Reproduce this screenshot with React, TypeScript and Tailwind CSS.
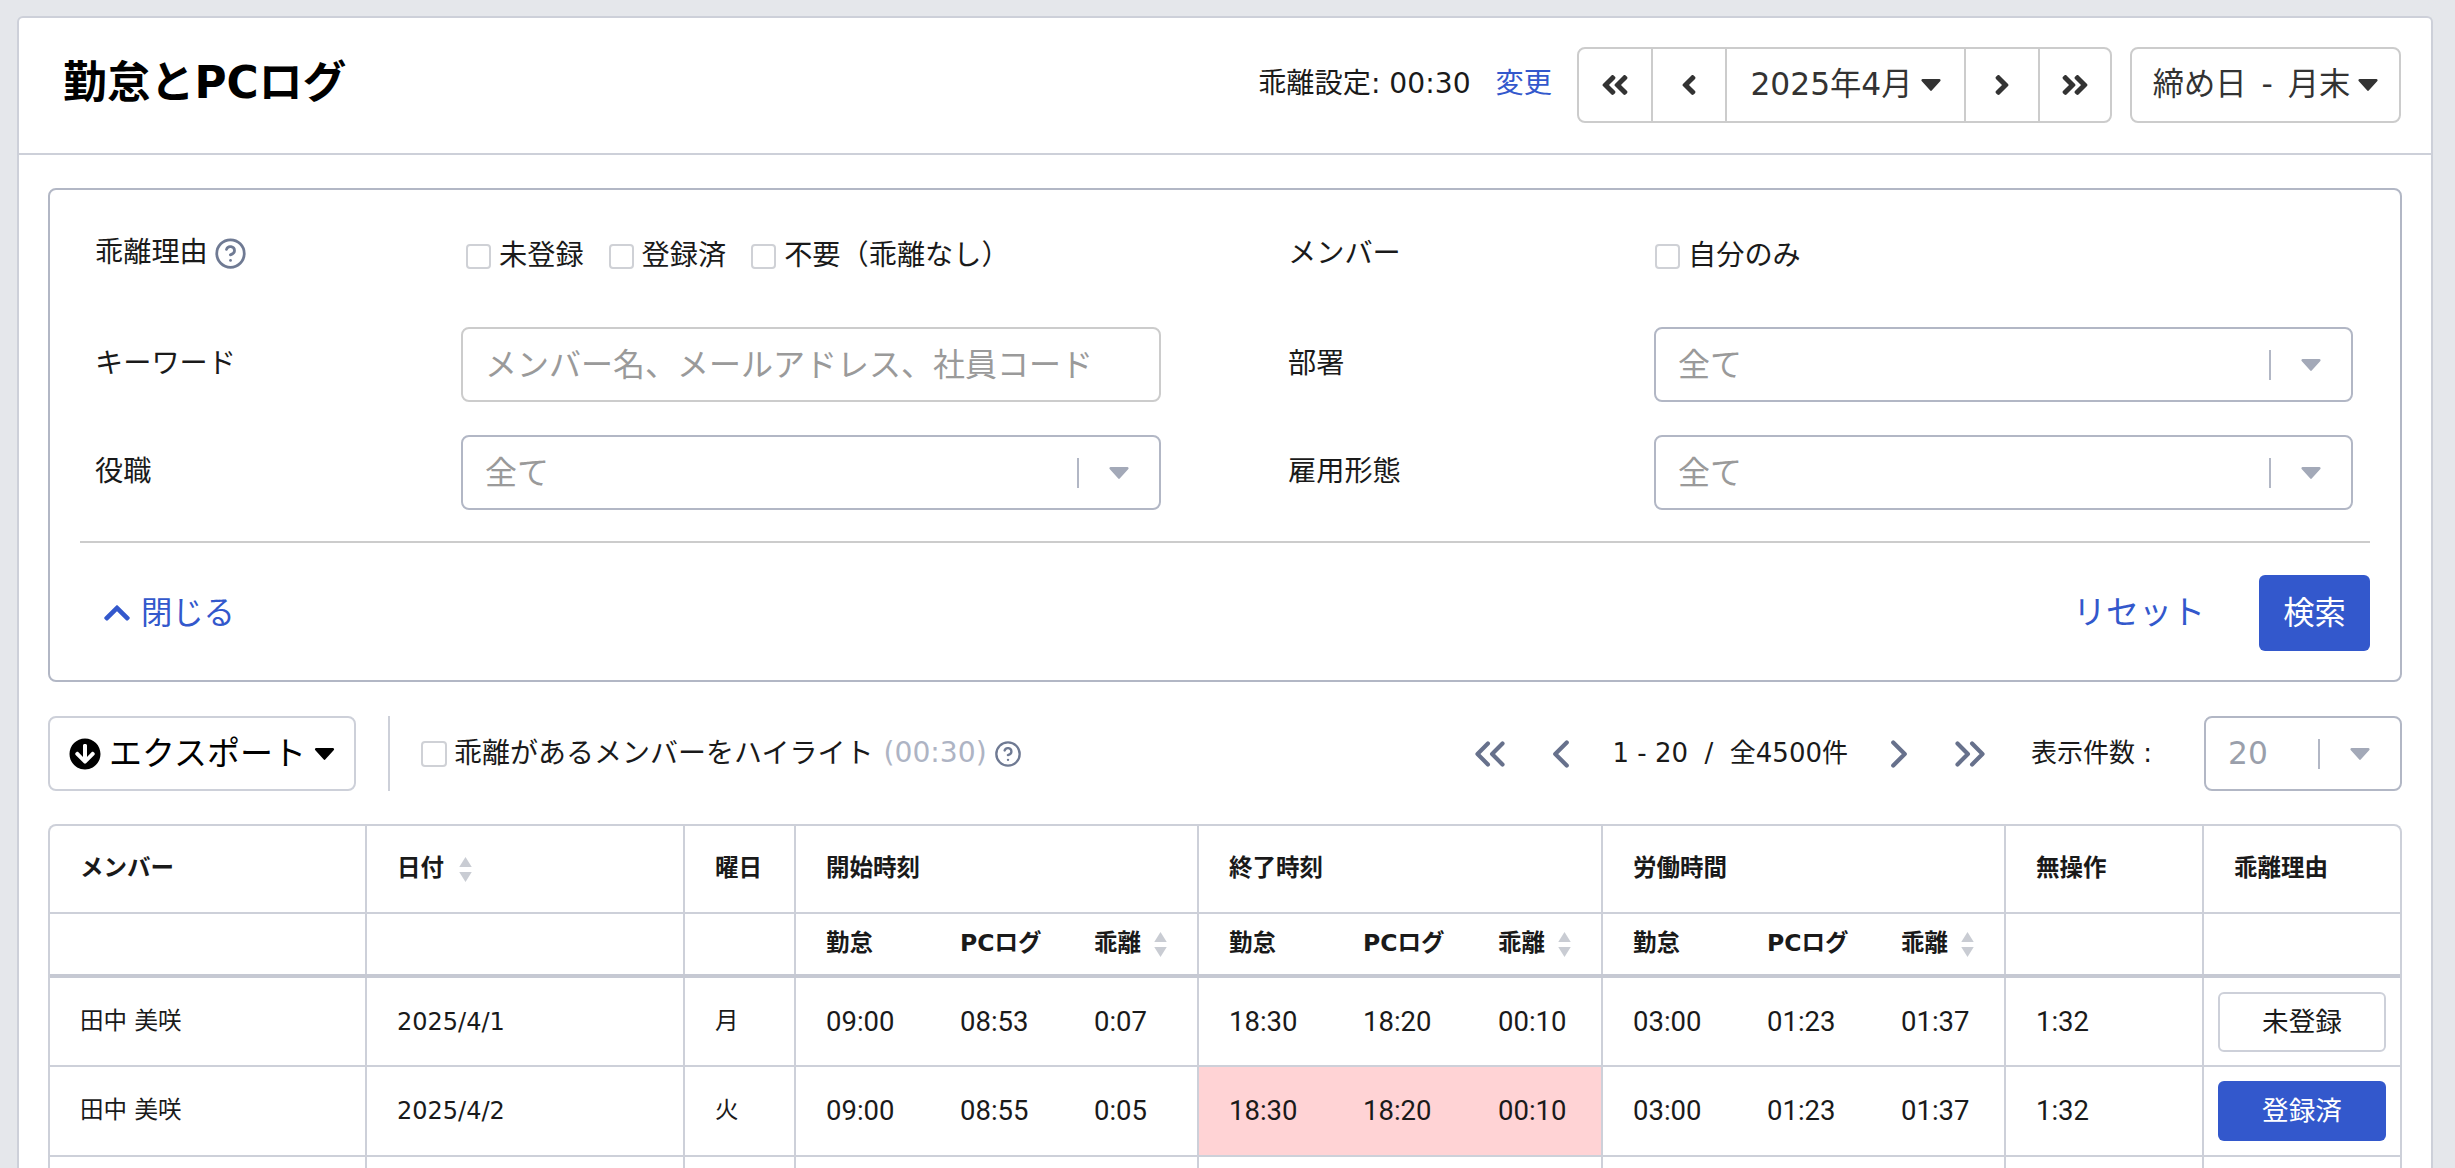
import { FaAngleDoubleLeft, FaAngleDoubleRight, FaAngleLeft, FaAngleRight, FaChevronUp, FaArrowCircleDown } from 'react-icons/fa';
import { ChevronsLeft, ChevronsRight, ChevronLeft, ChevronRight, CircleHelp } from 'lucide-react';

function Caret({ className }: { className: string }) {
  return (
    <svg viewBox="0 0 16 10" className={className} fill="currentColor">
      <path d="M1 0h14a1 1 0 0 1 .8 1.6l-7 7.8a1 1 0 0 1-1.6 0l-7-7.8A1 1 0 0 1 1 0z" />
    </svg>
  );
}

function SortIcon() {
  return (
    <svg viewBox="0 0 14 26" className="w-[15px] h-[25px] text-[#c9ccd3]" fill="currentColor">
      <path d="M7 0l6.5 10.5H.5z" />
      <path d="M7 26l6.5-10.5H.5z" />
    </svg>
  );
}

function Check({ label }: { label: string }) {
  return (
    <label className="flex items-center gap-[8px]">
      <span className="w-[25px] h-[25px] rounded-[4px] border-2 border-[#cfd1d6] bg-white" />
      <span className="text-[28.2px] text-[#1a1a1a]">{label}</span>
    </label>
  );
}

function SelectBox({ value }: { value: string }) {
  return (
    <div className="h-[75px] rounded-[8px] border-2 border-[#b2b7c5] flex items-center pl-[22px] bg-white">
      <span className="flex-1 text-[32px] text-[#9a9a9a]">{value}</span>
      <span className="w-[2px] h-[30px] bg-[#b2b7c5]" />
      <span className="w-[80px] flex justify-center">
        <Caret className="w-[20px] h-[12px] text-[#a3a9b8]" />
      </span>
    </div>
  );
}

const vline = 'border-r-2 border-[#cdd0d9]';
const th = 'text-left font-bold text-[23.5px] text-[#1a1a1a] align-middle';
const td = 'text-left text-[23.5px] text-[#1a1a1a] align-middle';
const time = "text-left font-['Roboto',sans-serif] text-[27.5px] text-[#1a1a1a] align-middle";

function SubHead() {
  return (
    <>
      <th className={`${th} pl-[30px]`}>勤怠</th>
      <th className={`${th} pl-[30px]`}>PCログ</th>
      <th className={`${th} pl-[30px] ${vline}`}>
        <span className="flex items-center gap-[12px]">乖離<SortIcon /></span>
      </th>
    </>
  );
}

function Times({ a, b, c, pink }: { a: string; b: string; c: string; pink?: boolean }) {
  const bg = pink ? 'bg-[#ffd3d5]' : '';
  return (
    <>
      <td className={`${time} pl-[30px] ${bg}`}>{a}</td>
      <td className={`${time} pl-[30px] ${bg}`}>{b}</td>
      <td className={`${time} pl-[30px] ${vline} ${bg}`}>{c}</td>
    </>
  );
}

const rows = [
  { date: '2025/4/1', day: '月', s: ['09:00', '08:53', '0:07'], pink: false, done: false },
  { date: '2025/4/2', day: '火', s: ['09:00', '08:55', '0:05'], pink: true, done: true },
];

export default function App() {
  return (
    <div className="h-screen overflow-hidden bg-[#e5e7eb] pt-[16px] pl-[17px] pr-[22px] font-['DejaVu_Sans','Noto_Sans_CJK_JP',sans-serif]">
      <div className="bg-white border-2 border-b-0 border-[#cdd0d9] rounded-t-[6px] h-[1200px]">
        <header className="h-[137px] border-b-2 border-[#cdd0d9] flex items-center justify-between pl-[44px] pr-[30px]">
          <h1 className="text-[43.8px] font-bold text-black leading-none pb-[6px]">勤怠とPCログ</h1>
          <div className="flex items-center mb-[2px]">
            <span className="text-[28.2px] text-[#1a1a1a]">乖離設定: 00:30</span>
            <a className="text-[28.2px] text-[#3358cc] ml-[25px] mr-[25px]">変更</a>
            <div className="flex w-[535px] h-[76px] rounded-[8px] border-2 border-[#cccccc] text-[#333333]">
              <div className="w-[74px] flex items-center justify-center border-r-2 border-[#cccccc]"><FaAngleDoubleLeft size={32} /></div>
              <div className="w-[74px] flex items-center justify-center border-r-2 border-[#cccccc]"><FaAngleLeft size={32} /></div>
              <div className="w-[239px] flex items-center justify-center gap-[8px] border-r-2 border-[#cccccc] text-[31.3px]">
                2025年4月<Caret className="w-[20px] h-[12px]" />
              </div>
              <div className="w-[74px] flex items-center justify-center border-r-2 border-[#cccccc]"><FaAngleRight size={32} /></div>
              <div className="flex-1 flex items-center justify-center"><FaAngleDoubleRight size={32} /></div>
            </div>
            <div className="ml-[18px] w-[271px] h-[76px] rounded-[8px] border-2 border-[#cccccc] flex items-center justify-center gap-[8px] text-[31.3px] text-[#333333]">
              <span className="[word-spacing:5px]">締め日 - 月末</span><Caret className="w-[20px] h-[12px]" />
            </div>
          </div>
        </header>

        <div className="px-[29px] pt-[33px]">
          <section className="h-[494px] rounded-[8px] border-2 border-[#b2b7c5] pt-[29px] px-[30px]">
            <div className="grid grid-cols-[366px_700px_493px_699px] gap-y-[33px] pl-[15px]">
              <div className="h-[75px] flex items-center gap-[6px] -mt-[3px] text-[28.2px] text-[#1a1a1a]">
                乖離理由<CircleHelp size={33} strokeWidth={2} className="text-[#6f7a93]" />
              </div>
              <div className="h-[75px] flex items-center gap-[25px] pl-[5px]">
                <Check label="未登録" />
                <Check label="登録済" />
                <Check label="不要（乖離なし）" />
              </div>
              <div className="h-[75px] flex items-center -mt-[2px] pl-[127px] text-[28.2px] text-[#1a1a1a]">メンバー</div>
              <div className="h-[75px] flex items-center pl-[1px]"><Check label="自分のみ" /></div>

              <div className="h-[75px] flex items-center text-[28.2px] text-[#1a1a1a]">キーワード</div>
              <div className="h-[75px] rounded-[8px] border-2 border-[#cccccc] flex items-center pl-[22px] text-[32px] text-[#9a9a9a]">
                メンバー名、メールアドレス、社員コード
              </div>
              <div className="h-[75px] flex items-center pl-[127px] text-[28.2px] text-[#1a1a1a]">部署</div>
              <SelectBox value="全て" />

              <div className="h-[75px] flex items-center text-[28.2px] text-[#1a1a1a]">役職</div>
              <SelectBox value="全て" />
              <div className="h-[75px] flex items-center pl-[127px] text-[28.2px] text-[#1a1a1a]">雇用形態</div>
              <SelectBox value="全て" />
            </div>
            <div className="mt-[31px] border-t-2 border-[#cccccc]" />
            <div className="flex items-center justify-between mt-[32px]">
              <a className="flex items-center gap-[9px] pl-[22px] text-[31.3px] text-[#3358cc]">
                <FaChevronUp size={30} />閉じる
              </a>
              <div className="flex items-center gap-[54px]">
                <a className="text-[33px] text-[#3358cc]">リセット</a>
                <button className="w-[111px] h-[76px] rounded-[6px] bg-[#3358cc] text-white text-[31.3px]">検索</button>
              </div>
            </div>
          </section>

          <div className="mt-[34px] flex items-center h-[75px]">
            <button className="w-[308px] h-[75px] rounded-[8px] border-2 border-[#cdd0d9] flex items-center justify-center gap-[8px] text-[33px] text-black">
              <FaArrowCircleDown size={32} />エクスポート<Caret className="w-[21px] h-[12px]" />
            </button>
            <span className="ml-[32px] w-[2px] h-[75px] bg-[#cdd0d9]" />
            <span className="ml-[31px] w-[26px] h-[26px] rounded-[4px] border-2 border-[#cfd1d6]" />
            <span className="ml-[7px] text-[28px] text-[#1a1a1a]">乖離があるメンバーをハイライト</span>
            <span className="ml-[10px] text-[28.2px] text-[#aeb4c4]">(00:30)</span>
            <CircleHelp size={28} strokeWidth={2} className="ml-[7px] text-[#6f7a93]" />
            <div className="ml-auto flex items-center text-[#67718c]">
              <ChevronsLeft size={50} strokeWidth={2} />
              <ChevronLeft size={46} strokeWidth={2.2} className="ml-[23px]" />
              <span className="ml-[28px] text-[26px] text-[#1a1a1a]">1 - 20&nbsp;&nbsp;/&nbsp;&nbsp;全4500件</span>
              <ChevronRight size={46} strokeWidth={2.2} className="ml-[28px]" />
              <ChevronsRight size={50} strokeWidth={2} className="ml-[23px]" />
              <span className="ml-[36px] w-[173px] text-[26px] text-[#1a1a1a]">表示件数 :</span>
            </div>
            <div className="w-[198px] h-[75px] rounded-[8px] border-2 border-[#b2b7c5] flex items-center pl-[22px]">
              <span className="flex-1 text-[31.3px] text-[#9a9fab]">20</span>
              <span className="w-[2px] h-[30px] bg-[#b2b7c5]" />
              <span className="w-[80px] flex justify-center"><Caret className="w-[20px] h-[12px] text-[#a3a9b8]" /></span>
            </div>
          </div>

          <div className="mt-[33px] rounded-t-[8px] border-2 border-b-0 border-[#cdd0d9] overflow-hidden">
            <table className="w-full table-fixed border-collapse">
              <colgroup>
                <col className="w-[316px]" />
                <col className="w-[318px]" />
                <col className="w-[111px]" />
                <col className="w-[135px]" /><col className="w-[134px]" /><col className="w-[134px]" />
                <col className="w-[135px]" /><col className="w-[135px]" /><col className="w-[134px]" />
                <col className="w-[135px]" /><col className="w-[134px]" /><col className="w-[134px]" />
                <col className="w-[198px]" />
                <col />
              </colgroup>
              <thead>
                <tr className="h-[87px] border-b-2 border-[#cdd0d9]">
                  <th className={`${th} pl-[30px] ${vline}`}>メンバー</th>
                  <th className={`${th} pl-[30px] ${vline}`}>
                    <span className="flex items-center gap-[14px]">日付<SortIcon /></span>
                  </th>
                  <th className={`${th} pl-[30px] ${vline}`}>曜日</th>
                  <th colSpan={3} className={`${th} pl-[30px] ${vline}`}>開始時刻</th>
                  <th colSpan={3} className={`${th} pl-[30px] ${vline}`}>終了時刻</th>
                  <th colSpan={3} className={`${th} pl-[30px] ${vline}`}>労働時間</th>
                  <th className={`${th} pl-[30px] ${vline}`}>無操作</th>
                  <th className={`${th} pl-[30px]`}>乖離理由</th>
                </tr>
                <tr className="h-[63px] border-b-4 border-[#c6c9d3]">
                  <th className={vline} />
                  <th className={vline} />
                  <th className={vline} />
                  <SubHead />
                  <SubHead />
                  <SubHead />
                  <th className={vline} />
                  <th />
                </tr>
              </thead>
              <tbody>
                {rows.map((r) => (
                  <tr key={r.date} className="h-[90px] border-b-2 border-[#cdd0d9]">
                    <td className={`${td} pl-[30px] ${vline}`}>田中 美咲</td>
                    <td className={`${td} pl-[30px] !text-[24px] ${vline}`}>{r.date}</td>
                    <td className={`${td} pl-[30px] ${vline}`}>{r.day}</td>
                    <Times a={r.s[0]} b={r.s[1]} c={r.s[2]} />
                    <Times a="18:30" b="18:20" c="00:10" pink={r.pink} />
                    <Times a="03:00" b="01:23" c="01:37" />
                    <td className={`${time} pl-[30px] ${vline}`}>1:32</td>
                    <td className="text-center">
                      {r.done ? (
                        <button className="w-[168px] h-[60px] rounded-[6px] bg-[#3358cc] text-white text-[26.6px]">登録済</button>
                      ) : (
                        <button className="w-[168px] h-[60px] rounded-[6px] border-2 border-[#cdd0d9] text-[#1a1a1a] text-[26.6px]">未登録</button>
                      )}
                    </td>
                  </tr>
                ))}
                <tr className="h-[90px]">
                  <td className={vline} /><td className={vline} /><td className={vline} />
                  <td /><td /><td className={vline} />
                  <td /><td /><td className={vline} />
                  <td /><td /><td className={vline} />
                  <td className={vline} /><td />
                </tr>
              </tbody>
            </table>
          </div>
        </div>
      </div>
    </div>
  );
}
